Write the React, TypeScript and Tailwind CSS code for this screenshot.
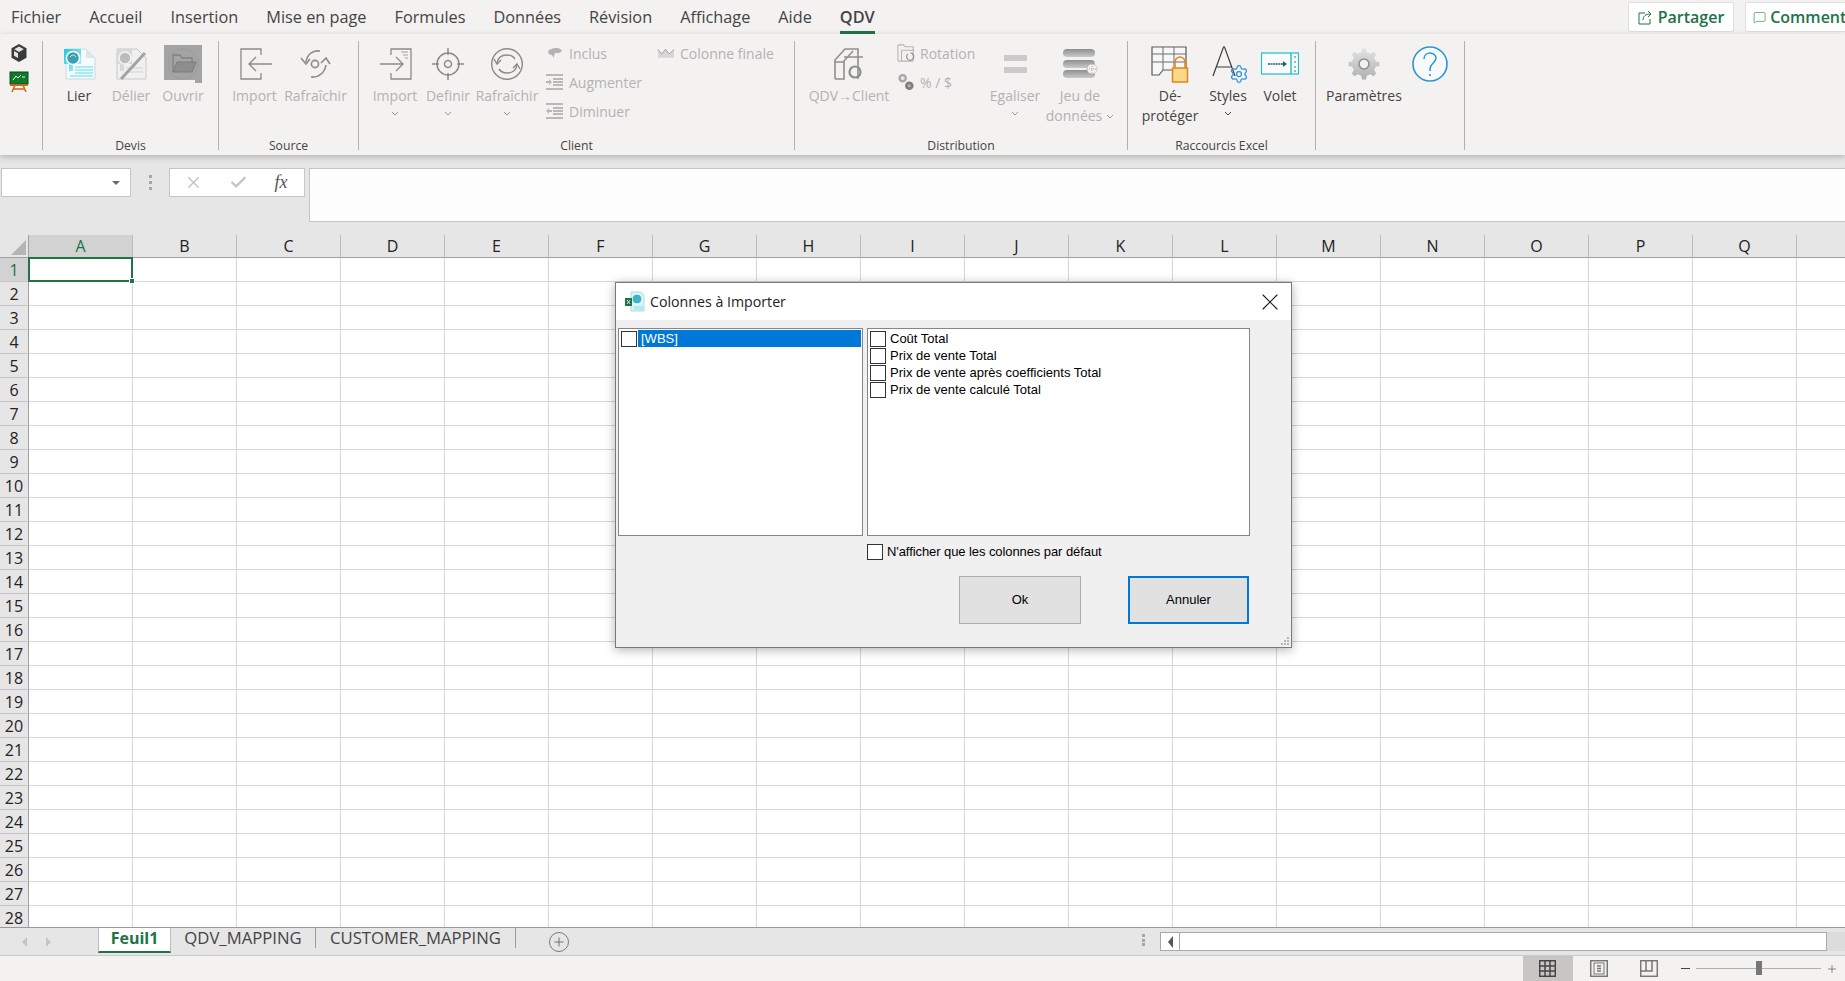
import React from 'react';
import { Check, MessageSquare, Plus, Settings, X } from 'lucide-react';

const tabs = ['Fichier', 'Accueil', 'Insertion', 'Mise en page', 'Formules', 'Données', 'Révision', 'Affichage', 'Aide', 'QDV'];
const columns = 'ABCDEFGHIJKLMNOPQ'.split('');
const rows = Array.from({ length: 28 }, (_, i) => i + 1);

const gearPath = (cx: number, cy: number, outer: number, inner: number, teeth: number) => {
  const pts: string[] = [];
  for (let i = 0; i < teeth; i++) {
    const step = (Math.PI * 2) / teeth;
    const a = i * step - Math.PI / 2;
    [[-0.3, inner], [-0.16, outer], [0.16, outer], [0.3, inner]].forEach(([o, r]) => {
      pts.push(`${(cx + Math.cos(a + o * step) * r).toFixed(1)},${(cy + Math.sin(a + o * step) * r).toFixed(1)}`);
    });
  }
  return pts.join(' ');
};

const Chevron = ({ className = 'text-[#9a9a9a]' }: { className?: string }) => (
  <svg width="8" height="5" viewBox="0 0 8 5" className={className}>
    <path d="M1 1l3 3 3-3" fill="none" stroke="currentColor" strokeWidth="1" />
  </svg>
);

const LierIcon = () => (
  <svg width="33" height="32" viewBox="0 0 33 32">
    <defs>
      <linearGradient id="lier" x1="0" y1="0" x2="1" y2="1">
        <stop offset="0" stopColor="#21c7e0" />
        <stop offset="1" stopColor="#b9f0f7" />
      </linearGradient>
    </defs>
    <path d="M3 1h20l9 9v21H3z" fill="#f5fbfd" stroke="#cfd8dc" />
    <path d="M23 1v9h9z" fill="#dfe6ea" />
    <path d="M1 1h17v15H10v7H6V16H1z" fill="url(#lier)" />
    <path d="M12 19h18M12 22h18M12 25h18M7 28h23" stroke="#8fe8f2" strokeWidth="1.5" />
    <circle cx="10" cy="10" r="6.5" fill="#3a9fb0" stroke="#fff" strokeWidth="1.5" />
    <path d="M7 9c2-3 5-2 6 0" stroke="#cdeff4" fill="none" />
  </svg>
);

const DelierIcon = () => (
  <svg width="33" height="32" viewBox="0 0 33 32">
    <path d="M2 1h20l9 9v21H2z" fill="#f1eff1" stroke="#c9c9c9" />
    <path d="M2 1h15v15H9v7H5V16H2z" fill="#d8d8d8" />
    <circle cx="10" cy="10" r="6" fill="#bdbdbd" stroke="#f5f5f5" strokeWidth="1.5" />
    <path d="M11 20h17M11 24h17" stroke="#dddddd" strokeWidth="1.5" />
    <path d="M30 5L6 31" stroke="#a3a3a3" strokeWidth="3" />
  </svg>
);

const OuvrirIcon = () => (
  <svg width="38" height="38" viewBox="0 0 38 38">
    <path d="M0 0h38v38H31v-3H0z" fill="#a4a4a4" />
    <circle cx="19" cy="19" r="15" fill="none" stroke="#9c9c9c" />
    <path d="M9 27V10h7l2 3h10v4" fill="none" stroke="#808080" strokeWidth="1.3" />
    <path d="M9 27l4-10h19l-4 10z" fill="#8e8e8e" stroke="#7c7c7c" />
  </svg>
);

const SourceImportIcon = () => (
  <svg width="36" height="32" viewBox="0 0 36 32" fill="none" stroke="#8a8a8a" strokeWidth="1.3">
    <path d="M24 7V1H4v30h20v-6" />
    <path d="M35 16H12M19 9l-7 7 7 7" />
  </svg>
);

const SourceRefreshIcon = () => (
  <svg width="36" height="32" viewBox="0 0 36 32" fill="none" stroke="#8a8a8a" strokeWidth="1.6">
    <circle cx="17" cy="16" r="3.6" />
    <path d="M22 3C14 2 9 7 8 14" />
    <path d="M3 10l5 6 4-5" />
    <path d="M13 29c8 1 14-5 15-12" />
    <path d="M23 15l5-5 4 6" />
  </svg>
);

const ClientImportIcon = () => (
  <svg width="36" height="32" viewBox="0 0 36 32" fill="none" stroke="#8a8a8a" strokeWidth="1.3">
    <path d="M14 7V1h20v30H14v-6" />
    <path d="M3 16h23M19 9l7 7-7 7" />
    <path d="M24 4h7M26 7h5M28 10h3" stroke="#bdbdbd" />
  </svg>
);

const DefinirIcon = () => (
  <svg width="36" height="32" viewBox="0 0 36 32" fill="none" stroke="#8a8a8a" strokeWidth="1.5">
    <circle cx="18" cy="16" r="11" />
    <circle cx="18" cy="16" r="3.5" />
    <path d="M18 0v7M18 25v7M2 16h7M27 16h7" />
  </svg>
);

const ClientRefreshIcon = () => (
  <svg width="36" height="32" viewBox="0 0 36 32" fill="none" stroke="#8a8a8a" strokeWidth="1.4">
    <circle cx="18" cy="16" r="15.3" />
    <path d="M8 15c1-6 5-8 10-8 3 0 6 1 8 4" />
    <path d="M5 11l3 5 4-4" />
    <path d="M28 17c-1 6-5 8-10 8-3 0-6-1-8-4" />
    <path d="M31 21l-3-5-4 4" />
  </svg>
);

const InclusIcon = () => (
  <svg width="16" height="12" viewBox="0 0 16 12">
    <path d="M1 5c1-3 5-4 9-4 2 0 4 1 5 3l-3 2H8l-1 3v2L5 8C3 8 1 7 1 5z" fill="#b3b1b3" />
  </svg>
);

const IndentIcon = ({ reverse = false }: { reverse?: boolean }) => (
  <svg width="18" height="16" viewBox="0 0 18 16">
    <path d="M0 1h17M7 5h10M7 8h10M7 11h10M0 15h17" stroke="#a8a6a8" strokeWidth="1.6" />
    <path d={reverse ? 'M0 8l3-3v2h3v2H3v2z' : 'M6 8L3 5v2H0v2h3v2z'} fill="#b8b6b8" />
  </svg>
);

const CrownIcon = () => (
  <svg width="19" height="11" viewBox="0 0 19 11">
    <path d="M1 1l4 5 4-5 4 5 5-5v9H1z" fill="#d8d6d8" />
    <path d="M1 1l4 5 4-5 4 5 5-5" fill="none" stroke="#8f8f8f" strokeWidth="0.8" />
  </svg>
);

const QdvClientIcon = () => (
  <svg width="30" height="32" viewBox="0 0 30 32" fill="none" stroke="#8f8f8f" strokeWidth="1.6">
    <path d="M1 31V12L11 1h13v30M1 31h9V13L19 3" />
    <path d="M10 14H1M10 9h19" />
    <circle cx="21" cy="24" r="5.5" strokeWidth="2.2" />
  </svg>
);

const RotationIcon = () => (
  <svg width="20" height="20" viewBox="0 0 20 20" fill="none" stroke="#b5b3b5" strokeWidth="1.2">
    <path d="M1 18V2a1 1 0 011-1h5l2 2h9v15a1 1 0 01-1 1H2a1 1 0 01-1-1z" />
    <path d="M5 19V7h14" />
    <path d="M15 10a4 4 0 11-3 1" stroke="#8a8a8a" />
  </svg>
);

const CoinsIcon = () => (
  <svg width="19" height="18" viewBox="0 0 19 18">
    <circle cx="6" cy="5" r="4.5" fill="#a8a6a8" />
    <circle cx="13" cy="13" r="4.5" fill="#7f7f7f" />
    <circle cx="6" cy="5" r="2" fill="#e8e8e8" />
    <circle cx="13" cy="13" r="1.6" fill="#b8b8b8" />
  </svg>
);

const EgaliserIcon = () => (
  <svg width="23" height="18" viewBox="0 0 23 18">
    <rect x="0" y="0" width="23" height="6" fill="#cbc9cb" />
    <rect x="0" y="12" width="23" height="6" fill="#cbc9cb" />
  </svg>
);

const JeuIcon = () => (
  <svg width="36" height="30" viewBox="0 0 36 30">
    <defs>
      <linearGradient id="bar" x1="0" y1="0" x2="0" y2="1">
        <stop offset="0" stopColor="#8f8f8f" />
        <stop offset="1" stopColor="#c9c9c9" />
      </linearGradient>
    </defs>
    <rect x="1" y="0" width="32" height="8" rx="4" fill="url(#bar)" />
    <rect x="1" y="11" width="32" height="8" rx="4" fill="url(#bar)" />
    <rect x="1" y="21" width="32" height="8" rx="4" fill="url(#bar)" />
    <circle cx="30" cy="20" r="5" fill="#f3f2f1" stroke="#a9a9a9" strokeDasharray="1 1" />
    <path d="M25 20h10M30 15v10" stroke="#a9a9a9" strokeDasharray="1 1" />
  </svg>
);

const ProtectIcon = () => (
  <svg width="38" height="37" viewBox="0 0 38 37">
    <path d="M1 1h34v23H12l-4 5H1z" fill="#f7f7f7" stroke="#5a5a5a" strokeWidth="1.2" />
    <path d="M1 8h34M1 16h34M12 1v23M23 1v20" stroke="#6e6e6e" />
    <path d="M24 23v-7a5 5 0 0110 0v7" fill="none" stroke="#e8821e" strokeWidth="1.5" />
    <rect x="21.5" y="22" width="15" height="14" fill="#f9d98a" stroke="#e8821e" strokeWidth="1.5" />
  </svg>
);

const StylesIcon = () => (
  <div className="relative h-[36px] w-[40px]">
    <svg width="26" height="32" viewBox="0 0 26 32" className="absolute left-[4px] top-0">
      <path d="M1 30L11.5 1h1L23 30M5 21h15" fill="none" stroke="#3c3c3c" strokeWidth="1.2" />
    </svg>
    <Settings size={20} strokeWidth={1.5} className="absolute left-[21px] top-[18px] text-[#2b8fd6]" />
  </div>
);

const VoletIcon = () => (
  <svg width="38" height="24" viewBox="0 0 38 24">
    <rect x="0.5" y="1" width="37" height="21" fill="#fbfdfd" stroke="#19c0c7" strokeWidth="1.2" />
    <path d="M30 1v21" stroke="#19c0c7" strokeWidth="1.4" />
    <path d="M7 12h17" stroke="#2a5c6a" strokeWidth="1.5" strokeDasharray="2 0.6" />
    <path d="M22 9l4 3-4 3z" fill="#2a5c6a" />
    <path d="M33 5h2M33 10h2M33 15h2M33 19h2" stroke="#2a7a84" strokeWidth="1.2" />
  </svg>
);

const GearIcon = () => (
  <svg width="32" height="32" viewBox="0 0 32 32">
    <defs>
      <linearGradient id="gear" x1="0" y1="0" x2="0" y2="1">
        <stop offset="0" stopColor="#e2e2e2" />
        <stop offset="1" stopColor="#b0b0b0" />
      </linearGradient>
    </defs>
    <polygon points={gearPath(16, 16, 15.5, 12, 8)} fill="url(#gear)" />
    <circle cx="16" cy="16" r="5" fill="#f1f1f1" stroke="#8f8f8f" strokeWidth="1.6" />
  </svg>
);

const HelpIcon = () => (
  <svg width="36" height="36" viewBox="0 0 36 36" fill="none">
    <circle cx="18" cy="18" r="17" fill="#f6fafd" stroke="#2e95d3" strokeWidth="1.6" />
    <path d="M12 13c0-4 3-6 6-6 4 0 6 3 6 5 0 5-6 5-6 11v2" stroke="#2e95d3" strokeWidth="1.5" />
    <circle cx="18" cy="29" r="1.1" fill="#2e95d3" />
  </svg>
);

const DialogIcon = () => (
  <svg width="21" height="21" viewBox="0 0 21 21">
    <path d="M7 1h10l3 3v16H7z" fill="#d8f3f8" stroke="#a9dfe8" />
    <circle cx="13" cy="8" r="5" fill="#3fb3c9" stroke="#fff" />
    <rect x="1" y="7" width="7" height="8" fill="#217346" />
    <path d="M3 9l3 4M6 9l-3 4" stroke="#fff" strokeWidth="0.8" />
    <path d="M10 16h9M10 18h9" stroke="#8fe0ec" />
  </svg>
);

type LargeProps = {
  lines: string[];
  width: string;
  icon: React.ReactNode;
  enabled?: boolean;
  chevron?: boolean;
  inlineChevron?: boolean;
};

const LargeButton = ({ lines, width, icon, enabled, chevron, inlineChevron }: LargeProps) => (
  <div className={`flex shrink-0 flex-col items-center ${width}`}>
    <div className="flex h-[45px] items-center justify-center pt-[1px]">{icon}</div>
    <div className={`whitespace-nowrap text-center text-[14px] leading-[20px] ${enabled ? 'text-[#444444]' : 'text-[#b3b1b1]'}`}>
      {lines.map((line, i) => (
        <div key={line} className="flex items-center justify-center gap-[4px]">
          {line}
          {inlineChevron && i === lines.length - 1 && <Chevron />}
        </div>
      ))}
    </div>
    {chevron && (
      <div className="flex h-[10px] items-center pt-[4px]">
        <Chevron className={enabled ? 'text-[#444444]' : 'text-[#9a9a9a]'} />
      </div>
    )}
  </div>
);

const SmallButton = ({ icon, label }: { icon: React.ReactNode; label: string }) => (
  <div className="flex h-[24px] items-center gap-[5px] whitespace-nowrap text-[14px] text-[#b3b1b1]">
    <div className="flex w-[18px] justify-center">{icon}</div>
    {label}
  </div>
);

const Group = ({ width, padding, label, children }: { width: string; padding: string; label?: string; children: React.ReactNode }) => (
  <div className={`flex h-[109px] shrink-0 flex-col border-r border-[#b3b0ad] ${width}`}>
    <div className={`flex h-[97px] ${padding}`}>{children}</div>
    <div className="h-[12px] text-center text-[12.2px] leading-[16px] text-[#444444]">{label}</div>
  </div>
);

const Ribbon = () => (
  <div className="relative z-10 flex h-[121px] shrink-0 bg-[#f3f2f1] pt-[7px] shadow-[0_2px_6px_rgba(0,0,0,0.22)]">
    <Group width="w-[43px]" padding="flex-col items-center gap-[8px] pt-[2px] pr-[5px]">
      <svg width="18" height="20" viewBox="0 0 18 20">
        <path d="M9 1l7.500 4.200v9.600L9 19l-7.500-4.200V5.200z" fill="#3a3a3a" />
        <path d="M9 3.500l4.800 2.700L9 9 4.200 6.200zM4 8l4 2.300V15l-4-2.300z" fill="#e4e4e4" />
      </svg>
      <svg width="20" height="21" viewBox="0 0 20 21">
        <rect x="1" y="1" width="18" height="12" fill="#0f7a2c" stroke="#0b4d1c" />
        <path d="M4 9l3-4 2 2 3-3M13 6h3" stroke="#e8ffe8" fill="none" />
        <path d="M1 14h18" stroke="#c9661a" strokeWidth="2" />
        <path d="M6 14l-3 7M14 14l3 7M4 18h12" stroke="#c9661a" strokeWidth="1.5" />
      </svg>
    </Group>
    <Group width="w-[176px]" padding="pl-[10px]" label="Devis">
      <LargeButton lines={['Lier']} width="w-[52px]" icon={<LierIcon />} enabled />
      <LargeButton lines={['Délier']} width="w-[52px]" icon={<DelierIcon />} />
      <LargeButton lines={['Ouvrir']} width="w-[52px]" icon={<OuvrirIcon />} />
    </Group>
    <Group width="w-[140px]" padding="pl-[5px]" label="Source">
      <LargeButton lines={['Import']} width="w-[61px]" icon={<SourceImportIcon />} />
      <LargeButton lines={['Rafraîchir']} width="w-[61px]" icon={<SourceRefreshIcon />} />
    </Group>
    <Group width="w-[436px]" padding="pl-[10px]" label="Client">
      <LargeButton lines={['Import']} width="w-[52px]" icon={<ClientImportIcon />} chevron />
      <LargeButton lines={['Definir']} width="w-[54px]" icon={<DefinirIcon />} chevron />
      <LargeButton lines={['Rafraîchir']} width="w-[64px]" icon={<ClientRefreshIcon />} chevron />
      <div className="ml-[7px] flex w-[111px] flex-col gap-[5px]">
        <SmallButton icon={<InclusIcon />} label="Inclus" />
        <SmallButton icon={<IndentIcon />} label="Augmenter" />
        <SmallButton icon={<IndentIcon reverse />} label="Diminuer" />
      </div>
      <SmallButton icon={<CrownIcon />} label="Colonne finale" />
    </Group>
    <Group width="w-[333px]" padding="pl-[9px]" label="Distribution">
      <LargeButton lines={['QDV→Client']} width="w-[90px]" icon={<QdvClientIcon />} />
      <div className="ml-[3px] flex w-[90px] flex-col gap-[5px]">
        <SmallButton icon={<RotationIcon />} label="Rotation" />
        <SmallButton icon={<CoinsIcon />} label="% / $" />
      </div>
      <LargeButton lines={['Egaliser']} width="w-[56px]" icon={<EgaliserIcon />} chevron />
      <LargeButton lines={['Jeu de', 'données']} width="w-[74px]" icon={<JeuIcon />} inlineChevron />
    </Group>
    <Group width="w-[188px]" padding="pl-[12px]" label="Raccourcis Excel">
      <LargeButton lines={['Dé-', 'protéger']} width="w-[60px]" icon={<ProtectIcon />} enabled />
      <LargeButton lines={['Styles']} width="w-[56px]" icon={<StylesIcon />} enabled chevron />
      <LargeButton lines={['Volet']} width="w-[48px]" icon={<VoletIcon />} enabled />
    </Group>
    <Group width="w-[149px]" padding="pl-[8px]">
      <LargeButton lines={['Paramètres']} width="w-[80px]" icon={<GearIcon />} enabled />
      <LargeButton lines={[]} width="w-[52px]" icon={<HelpIcon />} enabled />
    </Group>
  </div>
);

const TopTabs = () => (
  <div className="flex h-[34px] shrink-0 overflow-hidden bg-[#f3f2f1]">
    <div className="flex w-[1628px] shrink-0 gap-[28px] pl-[11px] text-[16.3px] text-[#444444]">
      {tabs.map(tab => (
        <div
          key={tab}
          className={`h-[34px] leading-[34px] ${tab === 'QDV' ? 'border-b-[3px] border-[#217346] font-semibold' : ''}`}
        >
          {tab}
        </div>
      ))}
    </div>
    <div className="flex shrink-0 gap-[11px] pt-[2px] text-[16px] font-semibold text-[#217346]">
      <div className="flex h-[30px] w-[106px] items-center justify-center gap-[5px] rounded-[2px] border border-[#e1dfdd] bg-white">
        <svg width="15" height="15" viewBox="0 0 15 15" fill="none" stroke="#217346">
          <path d="M7 3H1v11h11V9" />
          <path d="M5 10c0-4 3-6 7-6M10 1l3 3-3 3" />
        </svg>
        Partager
      </div>
      <div className="flex h-[30px] w-[140px] items-center gap-[4px] rounded-[2px] border border-[#e1dfdd] bg-white pl-[7px]">
        <MessageSquare size={19} strokeWidth={1.1} />
        Commentaires
      </div>
    </div>
  </div>
);

const FormulaBar = () => (
  <div className="flex h-[80px] shrink-0 items-start bg-[#e6e6e6] pt-[13px]">
    <div className="ml-[1px] flex h-[29px] w-[130px] items-center justify-end border border-[#c6c6c6] bg-white pr-[10px]">
      <div className="h-0 w-0 border-x-[4px] border-t-[4px] border-x-transparent border-t-[#6a6a6a]" />
    </div>
    <div className="flex h-[29px] w-[38px] flex-col items-center justify-center gap-[3px]">
      <div className="h-[3px] w-[3px] bg-[#a6a6a6]" />
      <div className="h-[3px] w-[3px] bg-[#a6a6a6]" />
      <div className="h-[3px] w-[3px] bg-[#a6a6a6]" />
    </div>
    <div className="flex h-[29px] w-[136px] items-center border border-[#c6c6c6] bg-white">
      <div className="flex w-[46px] justify-center text-[#c4c4c4]"><X size={19} strokeWidth={1.8} /></div>
      <div className="flex w-[45px] justify-center text-[#c4c4c4]"><Check size={19} strokeWidth={3} /></div>
      <div className="w-[40px] text-center font-['Liberation_Serif'] text-[18px] italic text-[#555555]">fx</div>
    </div>
    <div className="ml-[4px] h-[54px] flex-1 border-y border-l border-[#c6c6c6] bg-[#fdfdfd]" />
  </div>
);

const Sheet = () => (
  <div className="min-h-0 flex-1 overflow-hidden bg-white font-['Open_Sans'] text-[16px] text-[#222222]">
    <div className="grid h-[23px] grid-cols-[29px_repeat(17,104px)_1fr] bg-[#e6e6e6]">
      <div className="flex items-end justify-end border-r border-b border-[#a0a0a0] p-[2px]">
        <svg width="15" height="15" viewBox="0 0 15 15">
          <path d="M15 0v15H0z" fill="#b5b5b5" />
        </svg>
      </div>
      {columns.map(col => (
        <div
          key={col}
          className={`flex items-center justify-center border-r border-b border-b-[#a0a0a0] border-r-[#bdbdbd] leading-none ${col === 'A' ? 'bg-[#d2d2d2] text-[#217346]' : ''}`}
        >
          {col}
        </div>
      ))}
      <div className="border-b border-[#a0a0a0]" />
    </div>
    {rows.map(row => (
      <div key={row} className="grid h-[24px] grid-cols-[29px_repeat(17,104px)_1fr]">
        <div className={`flex items-center justify-center border-r border-b border-r-[#a0a0a0] border-b-[#c6c6c6] leading-none ${row === 1 ? 'bg-[#d2d2d2] text-[#217346]' : 'bg-[#e6e6e6]'}`}>
          {row}
        </div>
        {columns.map(col => (
          <div key={col} className="relative border-r border-b border-[#d6d6d6]">
            {row === 1 && col === 'A' && (
              <div className="absolute -inset-x-[1px] -top-[1px] -bottom-[1px] z-[1] border-2 border-[#217346]">
                <div className="absolute -right-[4px] -bottom-[4px] h-[6px] w-[6px] border border-white bg-[#217346]" />
              </div>
            )}
          </div>
        ))}
        <div className="border-b border-[#d6d6d6]" />
      </div>
    ))}
  </div>
);

const SheetTabs = () => (
  <div className="flex h-[29px] shrink-0 items-start border-t-[1.5px] border-b border-t-[#9a9a9a] border-b-[#cfc9cb] bg-[#e6e6e6] font-['Open_Sans'] text-[16.7px] text-[#444444]">
    <div className="flex h-[27px] w-[98px] shrink-0 items-center gap-[19px] pl-[22px]">
      <div className="h-0 w-0 border-y-[5px] border-r-[5px] border-y-transparent border-r-[#c4c4c4]" />
      <div className="h-0 w-0 border-y-[5px] border-l-[5px] border-y-transparent border-l-[#c4c4c4]" />
    </div>
    <div className="flex h-[25px] w-[73px] shrink-0 items-center justify-center border-x border-b-[2px] border-x-[#bdbdbd] border-b-[#217346] bg-white pb-[3px] text-[16px] font-bold text-[#217346]">
      Feuil1
    </div>
    <div className="flex h-[20px] w-[145px] shrink-0 items-center justify-center border-r border-[#9a9a9a]">QDV_MAPPING</div>
    <div className="flex h-[20px] w-[200px] shrink-0 items-center justify-center border-r border-[#9a9a9a]">CUSTOMER_MAPPING</div>
    <div className="ml-[33px] mt-[4px] flex h-[20px] w-[20px] shrink-0 items-center justify-center rounded-full border border-[#7a7a7a] text-[#6a6a6a]">
      <Plus size={14} strokeWidth={1.6} />
    </div>
    <div className="ml-[573px] mt-[6px] flex h-[12px] w-[3px] shrink-0 flex-col justify-between">
      <div className="h-[3px] w-[3px] bg-[#a6a6a6]" />
      <div className="h-[3px] w-[3px] bg-[#a6a6a6]" />
      <div className="h-[3px] w-[3px] bg-[#a6a6a6]" />
    </div>
    <div className="ml-[15px] mt-[4px] flex h-[19px] w-[667px] shrink-0 border border-[#a9a9a9] bg-white">
      <div className="flex w-[19px] items-center justify-center border-r border-[#a9a9a9]">
        <div className="h-0 w-0 border-y-[6px] border-r-[5px] border-y-transparent border-r-[#555555]" />
      </div>
    </div>
    <div className="mt-[4px] h-[19px] flex-1 bg-[#dcdcdc]" />
  </div>
);

const StatusBar = () => (
  <div className="flex h-[25px] shrink-0 items-center bg-[#f3f2f1] pl-[1523px]">
    <div className="flex h-[25px] w-[50px] items-center justify-center bg-[#c8c6c4] pr-[1px]">
      <svg width="17" height="17" viewBox="0 0 17 17" fill="none" stroke="#444444" strokeWidth="1.5">
        <rect x="0.700" y="0.700" width="15.600" height="15.600" />
        <path d="M0.700 6h15.600M0.700 11h15.600M6 0.700v15.600M11 0.700v15.600" />
      </svg>
    </div>
    <div className="flex w-[51px] justify-center">
      <svg width="18" height="17" viewBox="0 0 18 17" fill="none" stroke="#777777" strokeWidth="1.5">
        <rect x="0.700" y="0.700" width="16.600" height="15.600" />
        <rect x="4" y="3" width="10" height="11" strokeWidth="1" />
        <path d="M7 6h4M7 8.500h4M7 11h4" />
      </svg>
    </div>
    <div className="flex w-[49px] justify-center">
      <svg width="18" height="17" viewBox="0 0 18 17" fill="none" stroke="#777777" strokeWidth="1.500">
        <rect x="0.700" y="0.700" width="16.600" height="15.600" />
        <path d="M6 0.700V11H12V0.700M0.700 11H6" />
      </svg>
    </div>
    <div className="ml-[8px] h-[1.5px] w-[9px] bg-[#444444]" />
    <div className="relative ml-[6px] h-[1px] w-[125px] bg-[#b0b0b0]">
      <div className="absolute left-[60px] top-[-7px] h-[14px] w-[6px] bg-[#777777]" />
    </div>
    <Plus size={12} strokeWidth={1.2} className="ml-[5px] text-[#444444]" />
  </div>
);

const ListRow = ({ label, selected }: { label: string; selected?: boolean }) => (
  <div className="flex h-[17px] items-center">
    <div className="h-[16px] w-[16px] shrink-0 border border-[#333333] bg-white" />
    <div className={`ml-[1px] flex h-[17px] flex-1 items-center whitespace-nowrap pl-[3px] ${selected ? 'bg-[#0078d7] text-white' : 'text-black'}`}>
      {label}
    </div>
  </div>
);

const ImportDialog = () => (
  <div className="absolute left-[615px] top-[282px] z-20 flex h-[366px] w-[677px] flex-col border border-[#7a7a7a] bg-[#f0f0f0] font-['Liberation_Sans'] text-[13px] shadow-[0_2px_10px_rgba(0,0,0,0.3)]">
    <div className="flex h-[37px] shrink-0 items-center bg-white pl-[8px] pr-[7px]">
      <DialogIcon />
      <div className="ml-[5px] flex-1 font-['Open_Sans'] text-[14.2px] text-[#222222]">Colonnes à Importer</div>
      <X size={28} strokeWidth={1} className="text-[#222222]" />
    </div>
    <div className="flex gap-[4px] pl-[2px] pt-[8px]">
      <div className="h-[208px] w-[245px] border border-[#82878c] bg-white p-[1px] pl-[2px]">
        <ListRow label="[WBS]" selected />
      </div>
      <div className="h-[208px] w-[383px] border border-[#82878c] bg-white p-[1px] pl-[2px]">
        <ListRow label="Coût Total" />
        <ListRow label="Prix de vente Total" />
        <ListRow label="Prix de vente après coefficients Total" />
        <ListRow label="Prix de vente calculé Total" />
      </div>
    </div>
    <div className="ml-[251px] mt-[8px] flex h-[16px] items-center gap-[4px] tracking-[-0.08px] text-black">
      <div className="h-[16px] w-[16px] border border-[#333333] bg-white" />
      N'afficher que les colonnes par défaut
    </div>
    <div className="ml-[343px] mt-[16px] flex gap-[47px]">
      <div className="flex h-[48px] w-[122px] items-center justify-center border border-[#adadad] bg-[#e1e1e1]">Ok</div>
      <div className="flex h-[48px] w-[121px] items-center justify-center border-2 border-[#0078d7] bg-[#e1e1e1]">Annuler</div>
    </div>
    <svg width="10" height="10" viewBox="0 0 10 10" className="absolute bottom-[1px] right-[1px]">
      <path d="M7 1h2v2H7zM4 4h2v2H4zM7 4h2v2H7zM1 7h2v2H1zM4 7h2v2H4zM7 7h2v2H7z" fill="#b5b5b5" />
    </svg>
  </div>
);

export default function App() {
  return (
    <div className="relative flex h-screen w-full flex-col overflow-hidden bg-white font-['Open_Sans',sans-serif]">
      <TopTabs />
      <Ribbon />
      <FormulaBar />
      <Sheet />
      <SheetTabs />
      <StatusBar />
      <ImportDialog />
    </div>
  );
}
